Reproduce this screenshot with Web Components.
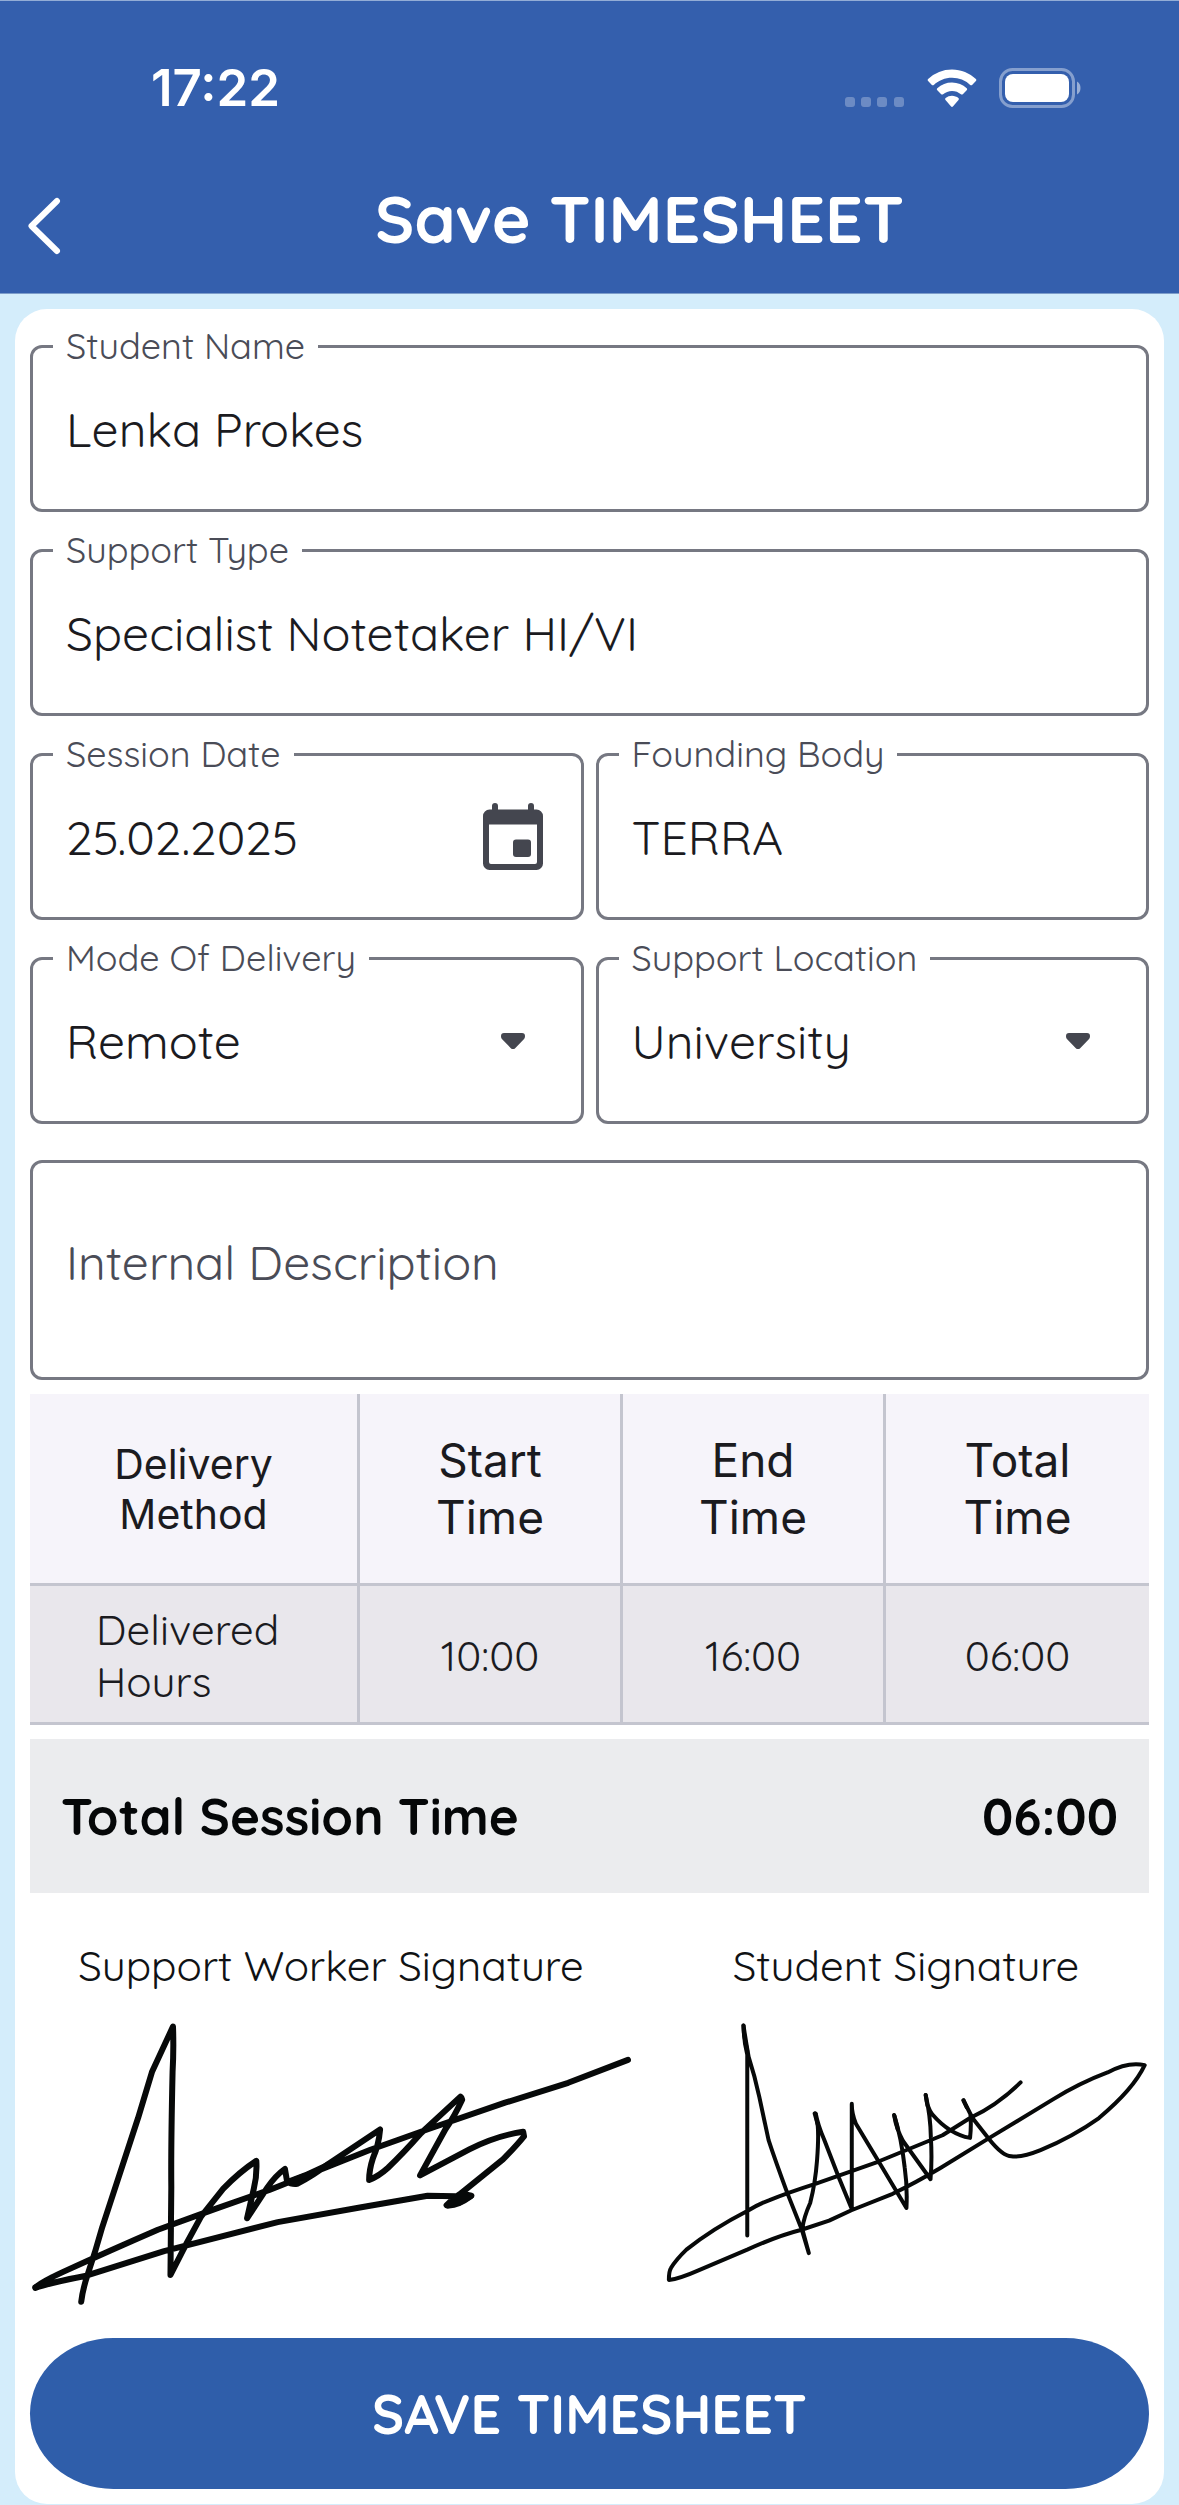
<!DOCTYPE html>
<html lang="en">
<head>
<meta charset="utf-8">
<meta name="viewport" content="width=device-width, initial-scale=1">
<title>Save TIMESHEET</title>
<style>
  html { background: #d4edfb; }
  body {
    margin: 0;
    --brand: #345fad;
    --line: #767882;
    --ink: #1b1b1f;
    --muted: #4a4c57;
    --icon: #44464f;
    --ui: Quicksand, Lato, "Open Sans", sans-serif;
    --system: Inter, Roboto, sans-serif;
    font-family: var(--ui);
    color: var(--ink);
  }
</style>
</head>
<body>
<timesheet-screen></timesheet-screen>

<script>
const define = (name, html, setup) => {
  const template = document.createElement('template');
  template.innerHTML = html;
  customElements.define(name, class extends HTMLElement {
    constructor() {
      super();
      this.attachShadow({ mode: 'open' }).append(template.content.cloneNode(true));
    }
    connectedCallback() {
      if (setup) setup(this, this.shadowRoot);
    }
  });
};

define('status-bar', `
  <style>
    :host { display: flex; align-items: center; justify-content: space-between; padding: 55px 98px 0 151px; color: #fff; }
    time { font: 600 51px/64px var(--system); }
    .icons { display: flex; align-items: center; gap: 22px; }
    svg { display: block; }
  </style>
  <time>17:22</time>
  <div class="icons">
    <svg width="60" height="40" viewBox="0 0 60 40" fill="#fff" fill-opacity=".28" role="img" aria-label="No signal">
      <rect x="0" y="29" width="10" height="10" rx="3"/><rect x="16" y="29" width="10" height="10" rx="3"/>
      <rect x="32" y="29" width="10" height="10" rx="3"/><rect x="49" y="29" width="10" height="10" rx="3"/>
    </svg>
    <svg width="50" height="40" viewBox="0 0 50 40" fill="#fff" role="img" aria-label="Wi-Fi">
      <path d="M25 1.5c9.2 0 17.600 3.600 23.900 9.500.6.500.6 1.400 0 2l-3.800 3.900c-.5.500-1.300.5-1.900 0A26.600 26.600 0 0 0 25 9.800c-7 0-13.400 2.700-18.200 7.100-.6.500-1.400.5-1.900 0L1.100 13c-.6-.6-.6-1.500 0-2A34.900 34.900 0 0 1 25 1.500z"/>
      <path d="M25 14.600c5.700 0 10.800 2.200 14.700 5.700.6.600.6 1.400 0 2l-3.900 3.900c-.5.500-1.300.5-1.900.1A13.200 13.200 0 0 0 25 22.900c-3.400 0-6.500 1.300-8.900 3.400-.6.400-1.400.4-1.900-.1l-3.900-3.900c-.6-.6-.6-1.400 0-2A21.900 21.900 0 0 1 25 14.600z"/>
      <path d="M25 27.800c2.500 0 4.700.9 6.400 2.300.6.500.6 1.300.1 1.800l-5.600 6.600c-.5.600-1.300.6-1.800 0l-5.600-6.600c-.5-.5-.5-1.300.1-1.800a10 10 0 0 1 6.400-2.300z"/>
    </svg>
    <svg width="82" height="42" viewBox="0 0 82 42" role="img" aria-label="Battery full">
      <rect x="1.500" y="2.500" width="73" height="37" rx="12" fill="none" stroke="#fff" stroke-opacity=".4" stroke-width="3"/>
      <rect x="6" y="7" width="64" height="28" rx="8" fill="#fff"/>
      <path d="M78 14.500c2.500 1.300 3.500 3.700 3.500 6.500s-1 5.200-3.500 6.500z" fill="#fff" fill-opacity=".5"/>
    </svg>
  </div>
`);

define('app-header', `
  <style>
    :host { display: block; box-sizing: border-box; background: var(--brand); border-top: 1px solid #93add6; border-bottom: 1px solid #7d9dca; color: #fff; }
    .bar { display: flex; align-items: center; padding: 57px 0 33px; }
    button { flex: 0 0 100px; padding: 14px 0 0 27px; border: 0; background: none; color: inherit; }
    svg { display: block; }
    h1 { flex: 1; margin: 0; text-align: center; font: 700 66px/83px var(--ui); }
  </style>
  <status-bar></status-bar>
  <div class="bar">
    <button type="button" aria-label="Back">
      <svg width="34" height="58" viewBox="0 0 34 58" fill="none" stroke="#fff" stroke-width="6" stroke-linecap="round" stroke-linejoin="round"><path d="M30 4 4.500 29 30 54"/></svg>
    </button>
    <h1><slot></slot></h1>
  </div>
`);

const fieldStyle = `
  <style>
    :host { display: block; min-width: 0; }
    fieldset { box-sizing: border-box; height: 190px; margin: 0; padding: 0 20px 22px; border: 3px solid var(--line); border-radius: 12px; min-width: 0; display: flex; align-items: center; }
    legend { padding: 0 13px; font: 36px/48px var(--ui); color: var(--muted); }
    .row { display: grid; grid-template-columns: minmax(0, 1fr) 96px; align-items: center; width: 100%; height: 100%; }
    input, select { box-sizing: border-box; grid-row: 1; grid-column: 1; width: 100%; height: 100%; margin: 0; padding: 0 13px; border: 0; outline: 0; background: none; appearance: none; font: 48px/60px var(--ui); color: var(--ink); }
    .wide { grid-column: 1 / 3; }
    .icon { grid-row: 1; grid-column: 2; justify-self: center; display: block; padding: 0; border: 0; background: none; color: var(--icon); }
    svg.icon { pointer-events: none; }
    svg { display: block; }
  </style>`;
const setupField = (host, root) => {
  root.querySelector('label').textContent = host.getAttribute('label');
  const control = root.querySelector('#control');
  const value = host.getAttribute('value');
  if (control.tagName === 'SELECT') control.replaceChildren(new Option(value, value, true, true));
  else control.value = value;
};

define('text-field', fieldStyle + `
  <fieldset>
    <legend><label for="control"></label></legend>
    <div class="row"><input id="control" class="wide" type="text"></div>
  </fieldset>
`, setupField);

define('date-field', fieldStyle + `
  <fieldset>
    <legend><label for="control"></label></legend>
    <div class="row">
      <input id="control" type="text" inputmode="numeric">
      <button class="icon" type="button" aria-label="Choose date">
        <svg width="60" height="67" viewBox="0 0 60 67" fill="currentColor">
          <path fill-rule="evenodd" d="M9 3a3 3 0 0 1 6 0v3.500h30V3a3 3 0 0 1 6 0v3.500h2.500A6.500 6.500 0 0 1 60 13v47.500a6.500 6.500 0 0 1-6.500 6.500h-47A6.500 6.500 0 0 1 0 60.500V13a6.500 6.500 0 0 1 6.500-6.500H9zM6 21.500V59a2 2 0 0 0 2 2h44a2 2 0 0 0 2-2V21.500z"/>
          <rect x="30" y="36.500" width="18" height="17.500" rx="3"/>
        </svg>
      </button>
    </div>
  </fieldset>
`, setupField);

define('select-field', fieldStyle + `
  <fieldset>
    <legend><label for="control"></label></legend>
    <div class="row">
      <select id="control" class="wide"></select>
      <svg class="icon" width="24" height="16" viewBox="0 0 24 16" fill="currentColor"><path d="M3 0h18a3 3 0 0 1 3 3c0 1.500-.4 2.500-1.400 3.500l-8.200 8.400a3.300 3.300 0 0 1-4.800 0L1.400 6.500C.4 5.500 0 4.500 0 3a3 3 0 0 1 3-3z"/></svg>
    </div>
  </fieldset>
`, setupField);

define('note-field', `
  <style>
    :host { display: block; padding-top: 22px; }
    textarea { display: block; box-sizing: border-box; width: 100%; height: 220px; padding: 69px 33px 20px; border: 3px solid var(--line); border-radius: 12px; outline: 0; resize: none; overflow: hidden; background: none; font: 48px/60px var(--ui); color: var(--ink); }
    textarea::placeholder { color: var(--muted); opacity: 1; }
  </style>
  <textarea aria-label="Internal Description" placeholder="Internal Description"></textarea>
`);

define('hours-table', `
  <style>
    :host { display: block; --rule: 3px solid #c4c5cf; }
    table { width: 100%; table-layout: fixed; border-collapse: separate; border-spacing: 0; }
    col:first-child { width: 330px; }
    th, td { box-sizing: border-box; padding: 0; border-bottom: var(--rule); border-right: var(--rule); text-align: center; vertical-align: middle; }
    th:last-child, td:last-child { border-right: 0; }
    thead th { height: 192px; background: #f6f4fa; font: 400 46px/57px var(--system); }
    thead th:first-child { font-size: 41px; line-height: 50px; }
    tbody th, tbody td { height: 139px; padding-top: 4px; background: #e9e7ec; font: 400 42px/52px var(--ui); }
    tbody th { padding-left: 66px; text-align: left; }
  </style>
  <table>
    <colgroup><col><col><col><col></colgroup>
    <thead><tr>
      <th scope="col">Delivery<br>Method</th><th scope="col">Start<br>Time</th><th scope="col">End<br>Time</th><th scope="col">Total<br>Time</th>
    </tr></thead>
    <tbody><tr><th scope="row">Delivered<br>Hours</th><td>10:00</td><td>16:00</td><td>06:00</td></tr></tbody>
  </table>
`);

define('session-total', `
  <style>
    :host { display: flex; align-items: center; justify-content: space-between; height: 154px; padding: 0 31px; background: #ebecee; color: #050708; font: 700 51px/64px var(--ui); }
  </style>
  <span><slot></slot></span><span><slot name="value"></slot></span>
`);

define('signature-pad', `
  <style>
    :host { display: flex; flex-direction: column; gap: 18px; min-width: 0; }
    .title { text-align: center; white-space: nowrap; font: 42px/52px var(--ui); color: #101214; }
    ::slotted(svg) { display: block; width: 100%; height: auto; }
  </style>
  <div class="title"><slot name="title"></slot></div>
  <slot></slot>
`);

define('save-button', `
  <style>
    :host { display: block; }
    button { display: block; width: 100%; height: 151px; border: 0; border-radius: 84px / 76px; background: #2f5eaa; color: #fff; font: 700 54px/68px var(--ui); }
  </style>
  <button type="button"><slot></slot></button>
`);

define('timesheet-screen', `
  <style>
    :host { display: block; }
    main { padding: 15px 15px 1px; }
    form { display: flex; flex-direction: column; gap: 14px; padding: 13px 15px 15px; background: #fff; border-radius: 32px; }
    .pair { display: grid; grid-template-columns: minmax(0, 1fr) minmax(0, 1fr); gap: 12px; }
    .signatures { display: grid; grid-template-columns: minmax(0, 602fr) minmax(0, 486fr); gap: 31px; padding-top: 33px; align-items: start; }
    path { fill: none; stroke: #070909; stroke-linecap: round; stroke-linejoin: round; vector-effect: non-scaling-stroke; }
  </style>
  <app-header>Save TIMESHEET</app-header>
  <main>
    <form>
      <text-field label="Student Name" value="Lenka Prokes"></text-field>
      <text-field label="Support Type" value="Specialist Notetaker HI/VI"></text-field>
      <div class="pair">
        <date-field label="Session Date" value="25.02.2025"></date-field>
        <text-field label="Founding Body" value="TERRA"></text-field>
      </div>
      <div class="pair">
        <select-field label="Mode Of Delivery" value="Remote"></select-field>
        <select-field label="Support Location" value="University"></select-field>
      </div>
      <note-field></note-field>
      <hours-table></hours-table>
      <session-total>Total Session Time<span slot="value">06:00</span></session-total>
      <div class="signatures">
        <signature-pad>
          <span slot="title">Support Worker Signature</span>
          <svg viewBox="0 0 602 314" role="img" aria-label="Support worker signature">
            <g transform="translate(-30 -290) scale(.4209 .3827)" stroke-width="6">
              <path d="M193 1520Q196 1490 208 1450Q228 1385 243 1325L328 1040L361 920L411 801Q413 860 410 920Q406 1120 407 1220L405 1450L442 1370L478 1297L530 1225Q570 1180 609 1152Q611 1190 603 1225L587 1302L635 1222Q655 1190 677 1173L682 1205Q692 1214 706 1212Q745 1190 780 1160L903 1070Q900 1110 886 1145Q877 1175 877 1202Q900 1192 922 1170Q960 1130 1000 1080L1094 984Q1097 986 1098 992Q1080 1035 1058 1070L998 1190L1115 1122Q1180 1086 1243 1076L1245 1088Q1225 1115 1195 1148L1095 1237Q1075 1250 1061 1268Q1085 1272 1118 1245L1016 1243L855 1274L660 1312L390 1388L205 1452Q120 1470 84 1484Q85 1475 150 1442Q270 1382 375 1332L510 1278L640 1228L880 1123L1020 1068L1200 1000L1350 948L1492 888"/>
              <path d="M84 1482L118 1466M1064 1268L1098 1238L1120 1243L1090 1262M686 1206L725 1190L780 1162"/>
            </g>
          </svg>
        </signature-pad>
        <signature-pad>
          <span slot="title">Student Signature</span>
          <svg viewBox="0 0 486 253" role="img" aria-label="Student signature" overflow="visible">
            <g transform="translate(-23 -290) scale(.3438 .3827)" stroke-width="4">
              <path d="M312 1347V875Q302 840 301 798Q308 840 316 880Q334 930 347 985L374 1098Q393 1150 428 1235L470 1330L491 1393L472 1330Q476 1300 495 1262Q510 1210 515 1150Q520 1090 517 1060L511 1028Q518 1060 535 1095L578 1195L616 1278V1003Q616 1030 628 1055L695 1155L775 1275Q778 1220 770 1170Q760 1090 739 1032Q746 1070 765 1100L845 1200Q850 1150 846 1090Q845 1035 831 980Q836 1015 850 1030Q900 1082 960 1092Q964 1060 961 1030L941 994L967 1040L1015 1095Q1055 1140 1080 1140Q1110 1144 1165 1124Q1260 1088 1335 1040Q1435 965 1468 902Q1420 892 1360 921Q1280 948 1200 992L1020 1090L875 1170Q800 1210 735 1238L615 1281L550 1308L470 1332Q400 1348 312 1384L170 1438Q115 1460 84 1463Q84 1440 90 1432Q105 1410 135 1384Q210 1330 312 1283Q345 1265 375 1255Q430 1235 510 1212L690 1155L880 1085L960 1040Q1040 1006 1107 947"/>
              <path d="M301 798L303 825L312 865M508 1028L518 1060M740 1034L750 1070M831 980L836 1008M941 994L950 1012"/>
            </g>
          </svg>
        </signature-pad>
      </div>
      <save-button>SAVE TIMESHEET</save-button>
    </form>
  </main>
`);
</script>
</body>
</html>
